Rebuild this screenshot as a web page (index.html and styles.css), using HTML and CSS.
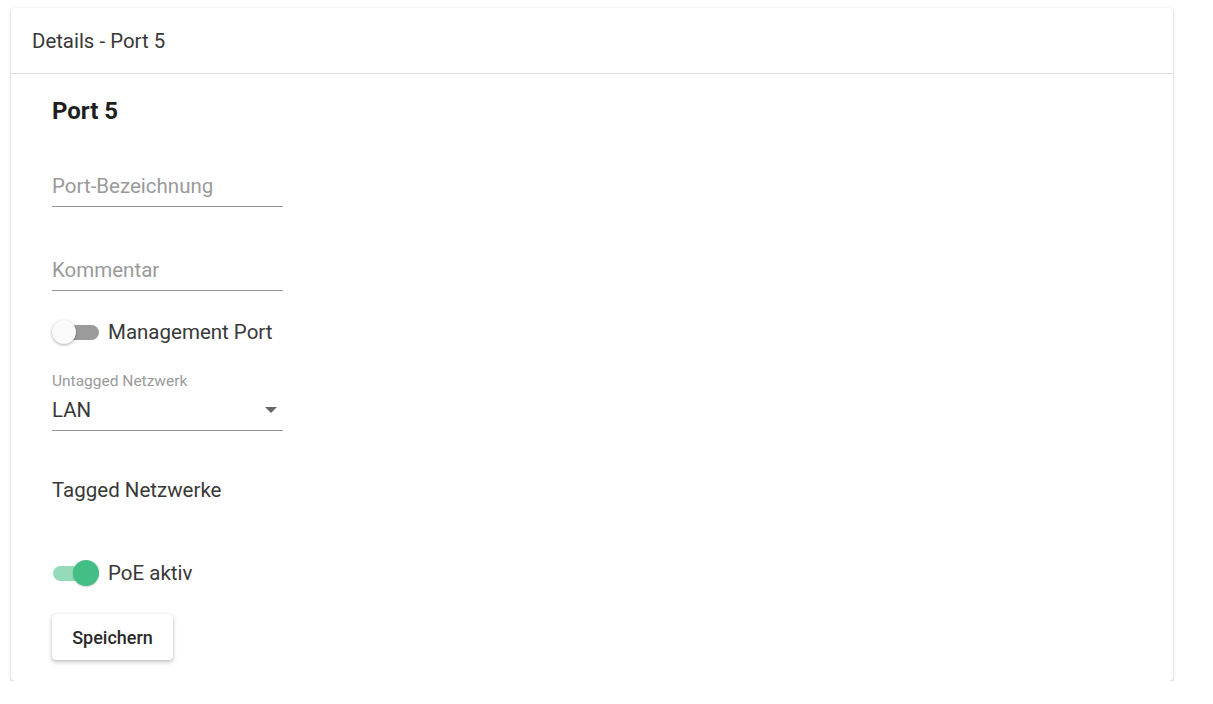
FILE: index.html
```html
<!DOCTYPE html>
<html lang="de">
<head>
  <meta charset="UTF-8" />
  <title>Details - Port 5</title>
  <link rel="stylesheet" href="styles.css">
</head>
<body>
  <div class="card">
    <div class="card-header">Details - Port 5</div>

    <div class="card-body">
      <h2 class="port-title">Port 5</h2>

      <div class="field field-name">
        <input class="field-input" type="text" placeholder="Port-Bezeichnung">
      </div>

      <div class="field field-comment">
        <input class="field-input" type="text" placeholder="Kommentar">
      </div>

      <label class="switch-row switch-mgmt">
        <span class="switch">
          <span class="switch-track"></span>
          <span class="switch-thumb"></span>
        </span>
        <span class="switch-label">Management Port</span>
      </label>

      <div class="select-field">
        <div class="select-label">Untagged Netzwerk</div>
        <div class="select-value">
          <span>LAN</span>
          <span class="select-arrow"></span>
        </div>
      </div>

      <div class="tagged">Tagged Netzwerke</div>

      <label class="switch-row switch-poe">
        <span class="switch is-on">
          <span class="switch-track"></span>
          <span class="switch-thumb"></span>
        </span>
        <span class="switch-label">PoE aktiv</span>
      </label>

      <button class="btn-save">Speichern</button>
    </div>
  </div>
</body>
</html>
```

FILE: styles.css
```css
:root {
  --text: #383838;
  --muted: #9a9a9a;
  --line: #949494;
  --green: #43bf85;
}

body {
  margin: 0;
  padding: 8px 0 0 11px;
  background: #fff;
  font-family: Roboto, "Liberation Sans", sans-serif;
  color: var(--text);
}

.card {
  width: 1162px;
  background: #fff;
  border-radius: 4px;
  box-shadow: 0 1px 3px rgba(0, 0, 0, 0.25), 0 1px 1px rgba(0, 0, 0, 0.1);
}

.card-header {
  height: 65px;
  padding: 0 21px;
  display: flex;
  align-items: center;
  font-size: 20.4px;
  border-bottom: 1px solid #dedede;
}

.card-body {
  padding: 23px 41px 21px;
}

.port-title {
  margin: 0;
  font-size: 24px;
  line-height: 28px;
  font-weight: 700;
  color: #1e1e1e;
}

.field {
  width: 231px;
  border-bottom: 1px solid var(--line);
}

.field-name {
  margin-top: 49px;
}

.field-comment {
  margin-top: 51px;
}

.field-input {
  display: block;
  width: 100%;
  border: none;
  outline: none;
  padding: 0 0 8px;
  margin: 0;
  font-family: inherit;
  font-size: 20.5px;
  line-height: 24px;
  color: var(--text);
  background: transparent;
}

.field-input::placeholder {
  color: var(--muted);
}

.switch-row {
  display: flex;
  align-items: center;
  height: 24px;
  gap: 10px;
}

.switch-mgmt {
  margin-top: 29px;
}

.switch-poe {
  margin-top: 59px;
}

.switch {
  position: relative;
  width: 46px;
  height: 24px;
  display: block;
}

.switch-track {
  position: absolute;
  left: 1px;
  top: 5px;
  width: 46px;
  height: 15px;
  border-radius: 8px;
  background: #9b9b9b;
}

.switch-thumb {
  position: absolute;
  left: 0;
  top: 0;
  width: 24px;
  height: 24px;
  border-radius: 50%;
  background: #fafafa;
  box-shadow: 0 1px 3px rgba(0, 0, 0, 0.35);
}

.switch.is-on .switch-track {
  background: #94dcb9;
}

.switch.is-on .switch-thumb {
  left: 21px;
  top: -1px;
  width: 26px;
  height: 26px;
  background: var(--green);
  box-shadow: 0 1px 2px rgba(0, 0, 0, 0.2);
}

.switch-label {
  font-size: 20.5px;
  line-height: 24px;
}

.select-field {
  width: 231px;
  margin-top: 29px;
  border-bottom: 1px solid var(--line);
}

.select-label {
  font-size: 15.5px;
  line-height: 16px;
  color: var(--muted);
}

.select-value {
  display: flex;
  justify-content: space-between;
  align-items: center;
  margin-top: 9px;
  padding-bottom: 8px;
  font-size: 20.5px;
  line-height: 24px;
}

.select-arrow {
  width: 0;
  height: 0;
  margin-right: 6px;
  border-left: 6px solid transparent;
  border-right: 6px solid transparent;
  border-top: 6px solid #666;
}

.tagged {
  margin-top: 47px;
  font-size: 20.5px;
  line-height: 24px;
}

.btn-save {
  display: block;
  margin-top: 29px;
  width: 121px;
  height: 46px;
  border: none;
  border-radius: 4px;
  background: #fff;
  font-family: inherit;
  font-size: 18px;
  font-weight: 500;
  color: #2a2a2a;
  box-shadow: 0 2px 4px rgba(0, 0, 0, 0.25), 0 0 1px rgba(0, 0, 0, 0.15);
  cursor: pointer;
}
```
